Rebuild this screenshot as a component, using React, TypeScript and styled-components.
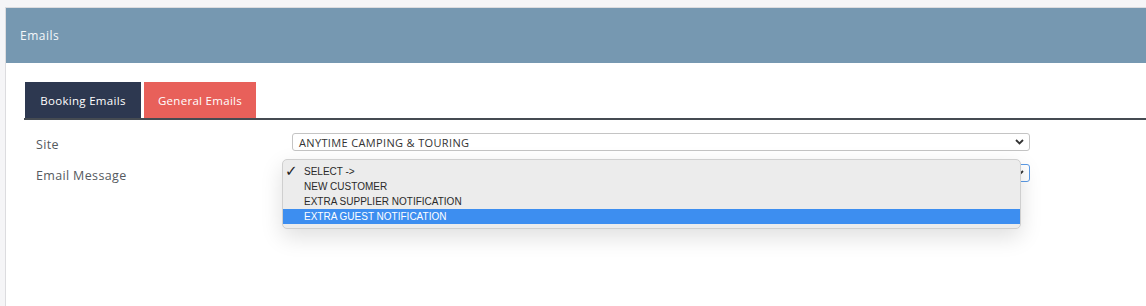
import styled, { createGlobalStyle } from 'styled-components';

const GlobalStyle = createGlobalStyle`
  html, body {
    margin: 0;
    padding: 0;
    background: #f5f5f7;
  }
  body {
    font-family: 'Open Sans', 'Liberation Sans', sans-serif;
  }
`;

const Page = styled.div`
  padding: 7px 0 0 5px;
  height: 306px;
  box-sizing: border-box;
  overflow: hidden;
`;

const Panel = styled.div`
  background: #ffffff;
  border-top: 1px solid #dcdcdf;
  border-left: 1px solid #dcdcdf;
  height: 100%;
  width: 1160px;
`;

const PanelHeader = styled.div`
  height: 55px;
  background: #7698b1;
  color: #f4f7fa;
  display: flex;
  align-items: center;
  padding-left: 14px;
  font-size: 12px;
  letter-spacing: 0.5px;
`;

const PanelBody = styled.div`
  padding: 19px 0 0 18px;
`;

const TabBar = styled.div`
  display: flex;
  gap: 3px;
  border-bottom: 2px solid #454b52;
  padding-left: 1px;
`;

const Tab = styled.div<{ $active?: boolean }>`
  height: 36px;
  width: ${({ $active }) => ($active ? '116px' : '112px')};
  display: flex;
  align-items: center;
  justify-content: center;
  font-size: 11.5px;
  letter-spacing: 0.3px;
  color: #ffffff;
  background: ${({ $active }) => ($active ? '#2d3850' : '#e8605a')};
`;

const Form = styled.div`
  display: flex;
  flex-direction: column;
  gap: 13px;
  padding: 13px 0 0 12px;
`;

const Row = styled.div`
  display: grid;
  grid-template-columns: 256px 738px;
  align-items: center;
`;

const Label = styled.div`
  font-size: 12.5px;
  line-height: 17px;
  letter-spacing: 0.35px;
  color: #555a60;
  margin: 2px 0 -2px;
`;

const SelectWrap = styled.div`
  position: relative;
`;

const FakeSelect = styled.div<{ $focused?: boolean }>`
  height: 18px;
  box-sizing: border-box;
  border: 1px solid ${({ $focused }) => ($focused ? '#5b9be6' : '#c4c4c4')};
  border-radius: 3px;
  background: #fff;
  display: flex;
  align-items: center;
  justify-content: space-between;
  padding: 0 5px 0 6px;
  font-size: 11px;
  letter-spacing: 0.35px;
  color: #333;
`;

const Chevron = () => (
  <svg width="9" height="6" viewBox="0 0 9 6">
    <path d="M1 1 L4.5 4.5 L8 1" fill="none" stroke="#333" strokeWidth="1.8" />
  </svg>
);

const Popup = styled.div`
  position: absolute;
  left: -10px;
  top: -5px;
  width: 739px;
  box-sizing: border-box;
  background: #ececec;
  border: 1px solid #cfcfcf;
  border-radius: 5px;
  box-shadow: 0 8px 22px rgba(0, 0, 0, 0.13);
  padding: 4px 0 4px;
  z-index: 2;
`;

const Option = styled.div<{ $highlight?: boolean }>`
  height: 15px;
  display: flex;
  align-items: center;
  padding-left: 21px;
  position: relative;
  font-family: 'Liberation Sans', Arial, sans-serif;
  font-size: 10px;
  color: ${({ $highlight }) => ($highlight ? '#ffffff' : '#2a2a2a')};
  background: ${({ $highlight }) => ($highlight ? '#3d8ef0' : 'transparent')};
`;

const Check = styled.span`
  position: absolute;
  left: 2px;
  top: -2px;
  font-family: 'DejaVu Sans', sans-serif;
  font-size: 15px;
  color: #222;
`;

const options = ['SELECT ->', 'NEW CUSTOMER', 'EXTRA SUPPLIER NOTIFICATION', 'EXTRA GUEST NOTIFICATION'];

export default function App() {
  return (
    <>
      <GlobalStyle />
      <Page>
        <Panel>
          <PanelHeader>Emails</PanelHeader>
          <PanelBody>
            <TabBar>
              <Tab $active>Booking Emails</Tab>
              <Tab>General Emails</Tab>
            </TabBar>
            <Form>
              <Row>
                <Label>Site</Label>
                <FakeSelect>
                  <span>ANYTIME CAMPING &amp; TOURING</span>
                  <Chevron />
                </FakeSelect>
              </Row>
              <Row>
                <Label>Email Message</Label>
                <SelectWrap>
                  <FakeSelect $focused>
                    <span />
                    <Chevron />
                  </FakeSelect>
                  <Popup>
                    {options.map((o, i) => (
                      <Option key={o} $highlight={i === 3}>
                        {i === 0 && <Check>✓</Check>}
                        {o}
                      </Option>
                    ))}
                  </Popup>
                </SelectWrap>
              </Row>
            </Form>
          </PanelBody>
        </Panel>
      </Page>
    </>
  );
}
